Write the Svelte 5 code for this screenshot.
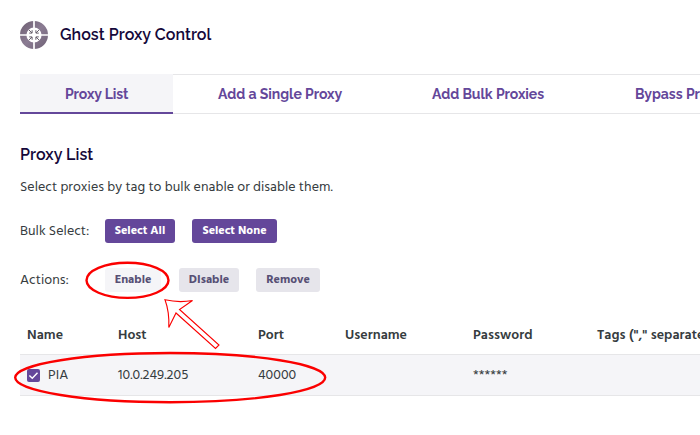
<script>
  const tabs = [
    { label: 'Proxy List', width: 63 },
    { label: 'Add a Single Proxy', width: 124 },
    { label: 'Add Bulk Proxies', width: 113 },
    { label: 'Bypass Proxies', width: 105 }
  ];
  const headers = ['Name', 'Host', 'Port', 'Username', 'Password', 'Tags ("," separated)'];
  let active = $state(0);
  let checked = $state(true);
</script>

<main>
  <header>
    <svg class="logo" width="28" height="28" viewBox="0 0 28 28">
      <defs>
        <linearGradient id="ring" x1="0" y1="0" x2="1" y2="1">
          <stop offset="0" stop-color="#746679" />
          <stop offset=".5" stop-color="#8b7c93" />
          <stop offset="1" stop-color="#75677c" />
        </linearGradient>
      </defs>
      <circle cx="14" cy="14" r="10.8" fill="none" stroke="url(#ring)" stroke-width="6.4" />
      <path d="M14 0V8M14 20V28M0 14H8M20 14H28" stroke="#fff" stroke-width="1.7" />
      <path d="M8.8 8.8l3.2 3.2M9.2 12.1H12.1V9.2M19.2 8.8l-3.2 3.2M18.8 12.1H15.9V9.2M8.8 19.2l3.2-3.2M9.2 15.9H12.1V18.8M19.2 19.2l-3.2-3.2M18.8 15.9H15.9V18.8" stroke="#67606c" stroke-width="1" fill="none" />
    </svg>
    <h1>Ghost Proxy Control</h1>
  </header>

  <nav>
    {#each tabs as tab, i}
      <button class="tab" class:active={active === i} onclick={() => (active = i)}>
        <span style="width: {tab.width}px">{tab.label}</span>
      </button>
    {/each}
  </nav>

  <h2>Proxy List</h2>
  <p class="intro">Select proxies by tag to bulk enable or disable them.</p>

  <div class="controls bulk">
    <span class="label">Bulk Select:</span>
    <button class="primary all">Select All</button>
    <button class="primary none">Select None</button>
  </div>
  <div class="controls actions">
    <span class="label">Actions:</span>
    <button class="enable">Enable</button>
    <button class="disable">DIsable</button>
    <button class="remove">Remove</button>
  </div>

  <div class="table">
    <div class="row head">
      {#each headers as h}<span>{h}</span>{/each}
    </div>
    <div class="row data">
      <span class="name">
        <button class="check" aria-label="Select PIA" onclick={() => (checked = !checked)}>
          {#if checked}
            <svg width="13" height="13" viewBox="0 0 13 13"><path d="M2.4 6.4l2.9 2.9 5.2-5.5" fill="none" stroke="#fff" stroke-width="1.4" /></svg>
          {/if}
        </button>PIA
      </span>
      <span class="host">10.0.249.205</span>
      <span class="port">40000</span>
      <span></span>
      <span class="pass">******</span>
      <span></span>
    </div>
  </div>

  <svg class="marks" width="700" height="435" viewBox="0 0 700 435" fill="none" stroke="#fb0000">
    <ellipse cx="127.5" cy="280.3" rx="41" ry="17.6" stroke-width="2.4" />
    <ellipse cx="170.2" cy="377.6" rx="155" ry="24.6" stroke-width="2.4" />
    <path d="M165 299.8Q179 303 192.5 300.5L179.5 309.5L219 345L215.5 348.5L176 313L168.8 327.5Q169.5 312 165 299.8Z" stroke-width="1.1" />
  </svg>
</main>

<style>
  :global(body) { background: #fff; overflow: hidden; }
  main {
    position: relative;
    box-sizing: border-box;
    width: 700px;
    height: 435px;
    padding: 20px 0 0 20px;
    overflow: hidden;
    background: #fff;
    color: #363c40;
    font: 14px/20px "Hind Siliguri", Hind, Mukta, "Noto Sans", sans-serif;
    letter-spacing: .035px;
  }
  button { font: inherit; border: 0; margin: 0; padding: 0; cursor: pointer; }
  header { display: flex; align-items: center; gap: 12px; height: 29px; }
  .logo { display: block; }
  h1, h2 {
    margin: 0;
    color: #15083a;
    font: 600 16px/20px Raleway, Lato, sans-serif;
    letter-spacing: .06px;
    white-space: nowrap;
  }
  nav {
    display: flex;
    box-sizing: border-box;
    width: 800px;
    height: 40px;
    margin-top: 25px;
    border-top: 1px solid #e6e6e8;
    border-bottom: 1px solid #e6e6e8;
  }
  .tab {
    flex: none;
    box-sizing: border-box;
    height: 40px;
    margin-top: -1px;
    padding: 1px 45px 1px;
    background: none;
    color: #64479a;
    font: 700 14px/38px Raleway, Lato, sans-serif;
    letter-spacing: -.05px;
    text-align: left;
    white-space: nowrap;
  }
  .tab span { display: block; }
  .tab.active { padding: 2px 45px 0; border-bottom: 2px solid #64479a; background: #f5f5f8; line-height: 36px; letter-spacing: -.1px; }
  h2 { margin-top: 31px; }
  .intro { margin: 12px 0 0; }
  .controls { display: flex; align-items: center; height: 24px; }
  .bulk { margin-top: 22px; }
  .actions { margin-top: 25px; }
  .label { width: 85px; white-space: nowrap; }
  .controls button {
    height: 24px;
    border-radius: 3px;
    background: #e6e5eb;
    color: #575075;
    font: 700 12px/22px "Hind Siliguri", Hind, Mukta, "Noto Sans", sans-serif;
    white-space: nowrap;
  }
  .controls .primary { background: #64479a; color: #fff; }
  .all { width: 70px; margin-right: 17px; }
  .none { width: 85px; }
  .controls .enable { width: 56px; margin-right: 18px; background: #f5f5f8; }
  .disable { width: 60px; margin-right: 17px; }
  .remove { width: 64px; }
  .table { width: 800px; margin-top: 22px; }
  .row {
    display: grid;
    grid-template-columns: 91px 140px 87px 128px 124px 1fr;
    align-items: center;
    box-sizing: border-box;
    padding-left: 7px;
    white-space: nowrap;
  }
  .head { height: 40px; padding-top: 2px; font-weight: 600; font-size: 14px; }
  .data { height: 42px; border: solid #e6e6e8; border-width: 1px 0; background: #f5f5f8; }
  .name { display: flex; align-items: center; gap: 8px; }
  .check { width: 13px; height: 13px; border-radius: 2px; background: #64479a; }
  .check svg { display: block; }
  .marks { position: absolute; left: 0; top: 0; pointer-events: none; }
</style>
